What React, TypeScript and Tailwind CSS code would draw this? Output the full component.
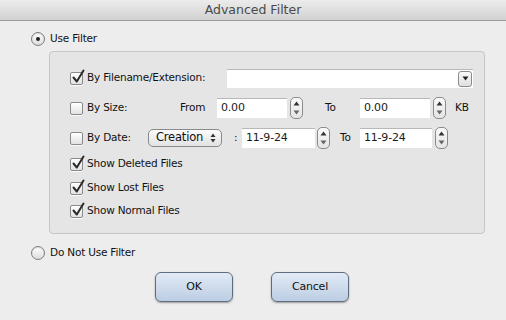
import React from 'react';

const font = { fontFamily: '"DejaVu Sans", "Liberation Sans", sans-serif' };

function Radio({ checked }: { checked?: boolean }) {
  return (
    <span className="w-[14px] h-[14px] rounded-full border border-[#7d7d7d] bg-gradient-to-b from-[#ffffff] to-[#dcdcdc] flex items-center justify-center shrink-0 shadow-[inset_0_1px_1px_rgba(0,0,0,0.15)]">
      {checked && <span className="w-[4px] h-[4px] rounded-full bg-[#222]" />}
    </span>
  );
}

function Check({ checked }: { checked?: boolean }) {
  return (
    <span className="relative w-[13px] h-[13px] rounded-[2px] border border-[#8a8a8a] bg-gradient-to-b from-[#ffffff] to-[#e2e2e2] shrink-0 shadow-[0_1px_0_rgba(255,255,255,0.8)]">
      {checked && (
        <svg className="absolute left-[1px] top-[-4px]" width="13" height="15" viewBox="0 0 13 15">
          <path d="M1.5 8.5 L4.8 12.5 L11.5 1.5" fill="none" stroke="#2a2a2a" strokeWidth="2" strokeLinecap="round" strokeLinejoin="round" />
        </svg>
      )}
    </span>
  );
}

function Stepper() {
  return (
    <span className="w-[13px] h-[22px] rounded-[5px] border border-[#8a8a8a] bg-gradient-to-b from-[#fafafa] to-[#e4e4e4] flex flex-col items-center justify-between py-[3px] shrink-0">
      <svg width="7" height="5" viewBox="0 0 7 5">
        <path d="M0.5 4.5 L3.5 0.5 L6.5 4.5 Z" fill="#333" />
      </svg>
      <svg width="7" height="5" viewBox="0 0 7 5">
        <path d="M0.5 0.5 L3.5 4.5 L6.5 0.5 Z" fill="#666" />
      </svg>
    </span>
  );
}

function Field({ value, w }: { value: string; w: string }) {
  return (
    <span className={`${w} h-[20px] bg-white border-t border-[#b8b8b8] flex items-center pl-[4px] text-[11px] text-[#1a1a1a] shrink-0`}>
      {value}
    </span>
  );
}

function CheckRow({ label }: { label: string }) {
  return (
    <span className="flex items-center gap-[4px] shrink-0">
      <Check checked />
      <span>{label}</span>
    </span>
  );
}

function Button({ children }: { children: React.ReactNode }) {
  return (
    <button className="w-[78px] h-[30px] rounded-[6px] border border-[#5f6d80] bg-gradient-to-b from-[#e2ebf6] to-[#bccde3] shadow-[0_1px_2px_rgba(0,0,0,0.35)] text-[11px] text-[#111]">
      {children}
    </button>
  );
}

export default function App() {
  return (
    <div className="w-[506px] h-[320px] bg-[#ededed] text-[10.5px] tracking-[-0.2px] text-[#111] overflow-hidden flex flex-col" style={font}>
      <div className="h-[21px] shrink-0 bg-gradient-to-b from-[#ececec] to-[#d2d2d2] border-b border-[#9a9a9a] flex items-center justify-center text-[12.5px] tracking-normal text-[#4a4a4a]">
        Advanced Filter
      </div>

      <div className="flex items-center gap-[5px] pl-[31px] mt-[11px] h-[14px]">
        <Radio checked />
        <span>Use Filter</span>
      </div>

      <div className="ml-[49px] mt-[5px] w-[436px] h-[183px] rounded-[4px] border border-[#c6c6c6] bg-[#e5e5e5] pl-[20px] flex flex-col">
        <div className="flex items-center h-[20px] mt-[16px]">
          <span className="flex items-center gap-[4px] w-[157px] shrink-0">
            <Check checked />
            <span>By Filename/Extension:</span>
          </span>
          <span className="w-[246px] h-[19px] bg-white border-t border-[#b8b8b8] flex items-center justify-end pr-[1px]">
            <span className="w-[14px] h-[16px] rounded-[3px] border border-[#8a8a8a] bg-gradient-to-b from-[#fafafa] to-[#e0e0e0] flex items-center justify-center">
              <svg width="7" height="5" viewBox="0 0 7 5">
                <path d="M0.5 0.5 L3.5 4.5 L6.5 0.5 Z" fill="#222" />
              </svg>
            </span>
          </span>
        </div>

        <div className="flex items-center h-[22px] mt-[9px]">
          <span className="flex items-center gap-[4px] w-[110px] shrink-0">
            <Check />
            <span>By Size:</span>
          </span>
          <span className="w-[37px] shrink-0">From</span>
          <Field value="0.00" w="w-[70px]" />
          <span className="ml-[3px]"><Stepper /></span>
          <span className="ml-[22px] w-[35px] shrink-0">To</span>
          <Field value="0.00" w="w-[70px]" />
          <span className="ml-[3px]"><Stepper /></span>
          <span className="ml-[9px]">KB</span>
        </div>

        <div className="flex items-center h-[22px] mt-[8px]">
          <span className="flex items-center gap-[4px] w-[78px] shrink-0">
            <Check />
            <span>By Date:</span>
          </span>
          <span className="w-[74px] h-[18px] rounded-[5px] border border-[#8a8a8a] bg-gradient-to-b from-[#fcfcfc] to-[#e2e2e2] flex items-center justify-between pl-[7px] pr-[5px] text-[11.5px] shrink-0">
            <span>Creation</span>
            <svg width="6" height="10" viewBox="0 0 6 10">
              <path d="M0.5 4 L3 0.5 L5.5 4 Z" fill="#333" />
              <path d="M0.5 6 L3 9.5 L5.5 6 Z" fill="#333" />
            </svg>
          </span>
          <span className="w-[20px] pl-[12px] shrink-0">:</span>
          <Field value="11-9-24" w="w-[73px]" />
          <span className="ml-[2px]"><Stepper /></span>
          <span className="pl-[10px] w-[30px] shrink-0">To</span>
          <Field value="11-9-24" w="w-[72px]" />
          <span className="ml-[3px]"><Stepper /></span>
        </div>

        <div className="flex items-center h-[14px] mt-[8px]">
          <CheckRow label="Show Deleted Files" />
        </div>
        <div className="flex items-center h-[14px] mt-[10px]">
          <CheckRow label="Show Lost Files" />
        </div>
        <div className="flex items-center h-[14px] mt-[9px]">
          <CheckRow label="Show Normal Files" />
        </div>
      </div>

      <div className="flex items-center gap-[5px] pl-[31px] mt-[12px] h-[14px]">
        <Radio />
        <span>Do Not Use Filter</span>
      </div>

      <div className="flex gap-[38px] pl-[155px] mt-[12px]">
        <Button>OK</Button>
        <Button>Cancel</Button>
      </div>
    </div>
  );
}
